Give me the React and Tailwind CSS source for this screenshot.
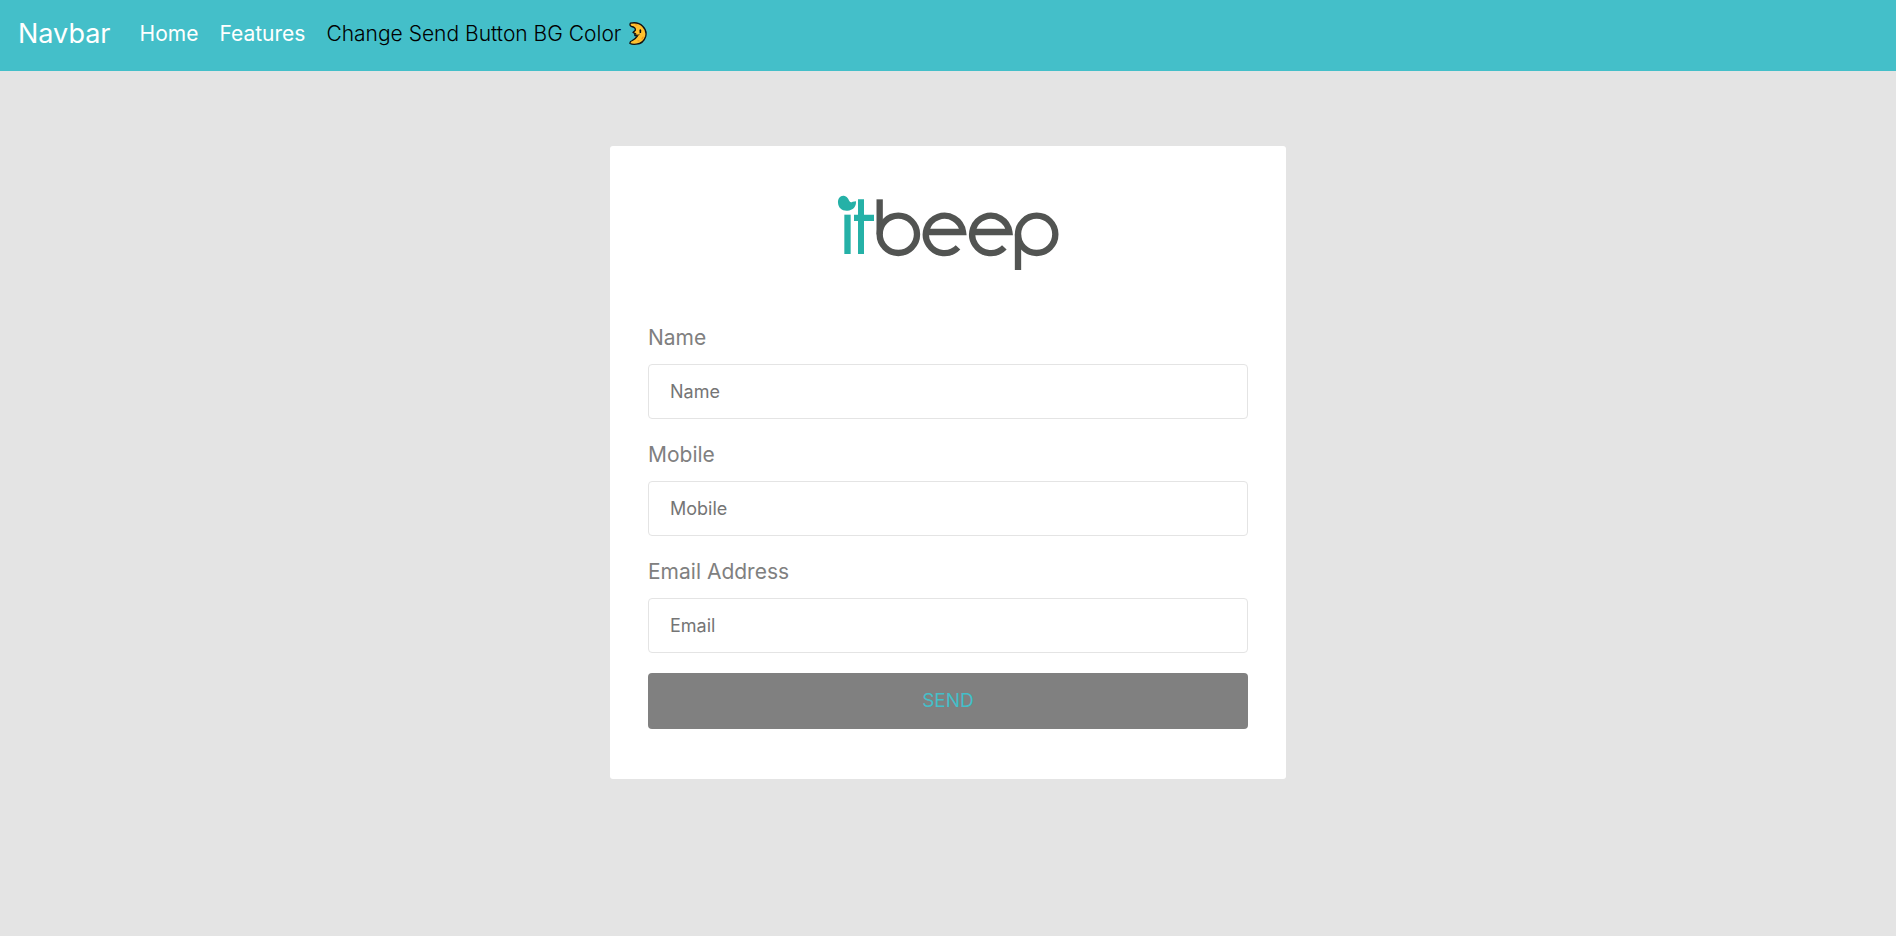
import React from "react";

const fields = [
  { id: "name", label: "Name", placeholder: "Name", type: "text" },
  { id: "mobile", label: "Mobile", placeholder: "Mobile", type: "tel" },
  { id: "email", label: "Email Address", placeholder: "Email", type: "email" },
];

function MoonIcon() {
  return (
    <svg viewBox="0 0 54 68" className="h-[23px] w-[18px] shrink-0" role="img" aria-label="Moon">
      <path
        d="M4 3C18 0 32 3 41 12C50 21 53 32 50 43C46 56 36 65 22 66C14 67 7 66 3 64C2 60 5 57 10 55C17 51 22 47 25 42L18 40C16 38 18 36 20 35L12 31L19 24C20 19 15 14 8 13C3 12 2 8 4 3Z"
        fill="#ffc02e"
        stroke="#111"
        strokeWidth="4"
        strokeLinejoin="round"
      />
      <path d="M34 24V30" stroke="#111" strokeWidth="5" strokeLinecap="round" />
      <path d="M22 39Q29 41 31 37" fill="none" stroke="#111" strokeWidth="3" strokeLinecap="round" />
      <path d="M20 8h4M42 45l-3 5M27 56h3" stroke="#f2981e" strokeWidth="4" strokeLinecap="round" />
    </svg>
  );
}

function Logo() {
  return (
    <svg viewBox="46 39 675 234" className="mx-auto h-[78px] w-[225px]" role="img" aria-label="itbeep">
      <g fill="#25b1a7">
        <path d="M52 68C51 55 59 46 69 47C79 48 83 56 86 63C89 68 92 68 96 65L106 64C107 80 97 92 80 92C64 93 53 83 52 68Z" />
        <path d="M71 104H90V222H71Z" />
        <path d="M112 58H130V104H160V123H130V222H112V123H100V104H112Z" />
      </g>
      <g fill="none" stroke="#525452" strokeWidth="19">
        <path d="M177 58V163" />
        <circle cx="233" cy="163" r="56" />
        <path d="M312 156H427A56 56 0 1 0 412 202" />
        <path d="M451 156H566A56 56 0 1 0 551 202" />
        <circle cx="648" cy="163" r="56" />
        <path d="M592 163V270" />
      </g>
    </svg>
  );
}

export default function App() {
  return (
    <div className="min-h-screen bg-[#e4e4e4] pb-12 font-[Inter,sans-serif] font-light">
      <nav className="flex min-h-[71px] flex-wrap items-center gap-x-[21px] bg-[#44bfc9] px-[18px] pb-1 text-[21px] leading-[30px]">
        <a href="#" className="mr-2 text-[27px] font-normal text-white">
          Navbar
        </a>
        <a href="#home" className="font-normal text-white">
          Home
        </a>
        <a href="#features" className="font-normal text-white">
          Features
        </a>
        <button type="button" className="flex items-center gap-2 text-black">
          Change Send Button BG Color
          <MoonIcon />
        </button>
      </nav>

      <main className="mx-auto mt-[75px] w-full max-w-[676px] rounded-[3px] bg-white px-[38px] pt-[47px] pb-[50px]">
        <Logo />
        <form className="mt-[51px] flex flex-col gap-5" onSubmit={(e) => e.preventDefault()}>
          {fields.map((f) => (
            <div key={f.id} className="flex flex-col gap-[10px]">
              <label htmlFor={f.id} className="text-[21px] leading-[32px] font-normal text-[#808080]">
                {f.label}
              </label>
              <input
                id={f.id}
                type={f.type}
                placeholder={f.placeholder}
                className="h-[55px] w-full rounded-[4px] border border-[#e4e4e4] bg-white px-[21px] text-[18px] font-normal text-[#757575] placeholder:text-[#757575]"
              />
            </div>
          ))}
          <button type="submit" className="h-14 w-full rounded-[4px] bg-[#808080] text-[19px] font-normal text-[#44bfc9]">
            SEND
          </button>
        </form>
      </main>
    </div>
  );
}
